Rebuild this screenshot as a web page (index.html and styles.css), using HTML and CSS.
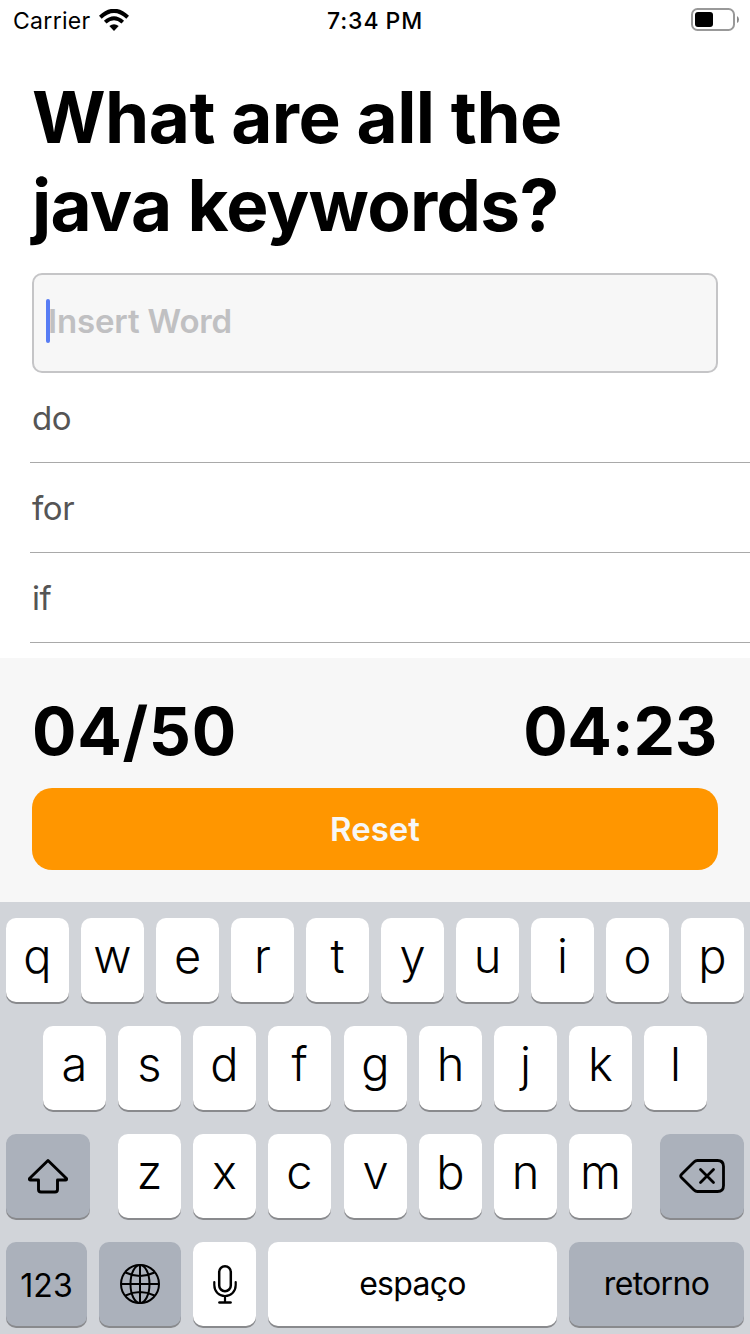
FILE: index.html
```html
<!DOCTYPE html>
<html lang="pt">
<head>
<meta charset="utf-8">
<title>Java keywords</title>
<link rel="stylesheet" href="styles.css">
</head>
<body>
<div class="screen">
  <header class="status">
    <div class="status-left">
      <span class="carrier">Carrier</span>
      <svg class="wifi" width="30" height="22" viewBox="0 0 30 22"><g fill="none" stroke="#000"><path d="M1.3 8.2Q15-4.6 28.7 8.2" stroke-width="4"/><path d="M6.2 13.2Q15 5.2 23.8 13.2" stroke-width="3.8"/></g><path d="M10.3 17.1Q15 13.3 19.7 17.1L15 22Z"/></svg>
    </div>
    <span class="clock">7:34 PM</span>
    <div class="status-right">
      <svg width="48" height="24" viewBox="0 0 48 24"><rect x="1" y="1" width="42" height="21" rx="5.5" fill="none" stroke="#999" stroke-width="2"/><rect x="4" y="4" width="18" height="15" rx="3"/><path d="M46 8q2 1 2 3.500t-2 3.500z" fill="#888"/></svg>
    </div>
  </header>
  <main class="content">
    <h1 class="title"><span class="line1">What are all the</span><br><span class="line2">java keywords?</span></h1>
    <div class="field"><span class="placeholder">Insert Word</span><span class="caret"></span></div>
    <ul class="words"><li>do</li><li>for</li><li>if</li></ul>
  </main>
  <section class="panel">
    <div class="stats"><span class="score">04/50</span><span class="timer">04:23</span></div>
    <button class="reset"><span>Reset</span></button>
  </section>
  <section class="keyboard">
    <div class="row"><span class="key">q</span><span class="key">w</span><span class="key">e</span><span class="key">r</span><span class="key">t</span><span class="key">y</span><span class="key">u</span><span class="key">i</span><span class="key">o</span><span class="key">p</span></div>
    <div class="row middle"><span class="key">a</span><span class="key">s</span><span class="key">d</span><span class="key">f</span><span class="key wide-gap">g</span><span class="key">h</span><span class="key">j</span><span class="key">k</span><span class="key">l</span></div>
    <div class="row spread">
      <span class="key dark shift"><svg width="42" height="36" viewBox="0 0 42 36"><path d="M21 2.500L39.500 20.500Q40 22 38.500 22H30.500V31.500Q30.500 34 28 34H14Q11.500 34 11.500 31.500V22H3.500Q2 22 2.500 20.500Z" fill="none" stroke="#000" stroke-width="2.900" stroke-linejoin="round"/></svg></span>
      <div class="letters"><span class="key">z</span><span class="key">x</span><span class="key">c</span><span class="key wide-gap">v</span><span class="key">b</span><span class="key">n</span><span class="key">m</span></div>
      <span class="key dark shift"><svg width="46" height="36" viewBox="0 0 46 36"><g fill="none" stroke="#000" stroke-width="2.800" stroke-linecap="round" stroke-linejoin="round"><path d="M18.500 2.500H38.500Q44.500 2.500 44.500 8.500V27.500Q44.500 33.500 38.500 33.500H18.500Q16.500 33.500 15 32L2.400 19.500Q1 18 2.400 16.500L15 4Q16.500 2.500 18.500 2.500Z"/><path d="M21.500 11.500L34.500 24.500M34.500 11.500L21.500 24.500"/></g></svg></span>
    </div>
    <div class="row">
      <span class="key dark numbers">123</span>
      <span class="key dark globe"><svg width="40" height="40" viewBox="0 0 40 40"><g fill="none" stroke="#000" stroke-width="2"><circle cx="20" cy="20" r="19"/><ellipse cx="20" cy="20" rx="9.500" ry="19"/><path d="M20 1V39M1 20H39M5.500 8.500Q20 15.500 34.500 8.500M5.500 31.500Q20 24.500 34.500 31.500"/></g></svg></span>
      <span class="key mic"><svg width="24" height="40" viewBox="0 0 24 40"><g fill="none" stroke="#000" stroke-linecap="round"><rect x="6.200" y="2.200" width="11.600" height="25" rx="5.800" stroke-width="2.500"/><path d="M1.300 18V21C1.300 27.500 6 32 12 32S22.700 27.500 22.700 21V18M12 32V38" stroke-width="2.200"/><path d="M6.500 38.500H17.500" stroke-width="2.700"/></g></svg></span>
      <span class="key label space"><span>espaço</span></span>
      <span class="key label dark return"><span>retorno</span></span>
    </div>
  </section>
</div>
</body>
</html>
```
FILE: styles.css
```css
* { box-sizing: border-box; }
body { margin: 0; background: #fff; }
.screen {
  width: 750px;
  height: 1334px;
  overflow: hidden;
  display: flex;
  flex-direction: column;
  font-family: Inter, "Liberation Sans", sans-serif;
  color: #000;
}
svg { display: block; flex: none; }
.status {
  height: 40px;
  padding: 0 11px 0 13px;
  display: grid;
  grid-template-columns: 1fr auto 1fr;
  align-items: center;
  font-size: 23px;
}
.status-left { display: flex; align-items: center; gap: 8px; }
.carrier { padding-top: 2px; letter-spacing: 0.3px; }
.clock { padding-top: 2px; margin-right: 2px; font-weight: 550; letter-spacing: 0.9px; word-spacing: -1px; }
.status-right { display: flex; justify-content: flex-end; }
.content { height: 618px; padding-top: 33px; }
.title {
  margin: 0;
  padding-left: 32px;
  height: 200px;
  font-size: 71px;
  line-height: 88px;
  font-weight: 700;
  white-space: nowrap;
}
.line1 { letter-spacing: -0.55px; }
.line2 { letter-spacing: -0.75px; }
.field {
  position: relative;
  height: 100px;
  margin: 0 32px;
  padding: 0 14px 4px;
  display: flex;
  align-items: center;
  background: #f7f7f7;
  border: 2px solid #c5c5c7;
  border-radius: 10px;
}
.placeholder { color: #c0c0c2; font-size: 33px; font-weight: 600; letter-spacing: -0.15px; }
.caret {
  position: absolute;
  left: 12px;
  top: 24px;
  width: 4px;
  height: 44px;
  border-radius: 2px;
  background: #587df4;
}
.words { list-style: none; margin: 0; padding: 0 0 0 30px; }
.words li {
  height: 90px;
  padding-left: 2px;
  font-size: 33px;
  line-height: 90px;
  letter-spacing: -0.4px;
  color: #555;
  border-bottom: 1px solid #a9a9a9;
}
.panel { height: 244px; padding: 36px 32px 0; background: #f7f7f7; }
.stats {
  display: flex;
  justify-content: space-between;
  height: 94px;
  font-size: 66px;
  line-height: 74px;
  font-weight: 700;
}
.score { letter-spacing: 0.7px; }
.timer { padding-right: 1px; letter-spacing: -0.3px; }
.reset {
  display: flex;
  align-items: center;
  justify-content: center;
  width: 100%;
  height: 82px;
  padding: 0;
  border: 0;
  border-radius: 20px;
  background: #ff9600;
  color: #f7f7f7;
  font: 600 33px Inter, sans-serif;
}
.keyboard {
  height: 432px;
  padding: 16px 6px 0;
  background: #d1d4d9;
  display: flex;
  flex-direction: column;
  gap: 24px;
}
.row, .letters { display: flex; gap: 12px; height: 84px; }
.middle { justify-content: center; }
.spread { justify-content: space-between; }
.wide-gap { margin-left: 1px; }
.key {
  width: 63px;
  height: 84px;
  flex: none;
  padding-bottom: 10px;
  display: flex;
  align-items: center;
  justify-content: center;
  background: #fff;
  border-radius: 10px;
  box-shadow: 0 2px 0 #898a8d;
  font-size: 47px;
  font-weight: 350;
}
.dark { background: #abb1bb; }
.shift { width: 84px; padding: 0; }
.numbers { width: 81px; padding: 2px 0 0; font-size: 32px; font-weight: 400; }
.globe { width: 82px; padding: 0; }
.mic { padding: 0; }
.label { font-size: 32px; font-weight: 400; padding-bottom: 2px; letter-spacing: -0.7px; }
.space { width: 289px; }
.return { width: 175px; }
```
